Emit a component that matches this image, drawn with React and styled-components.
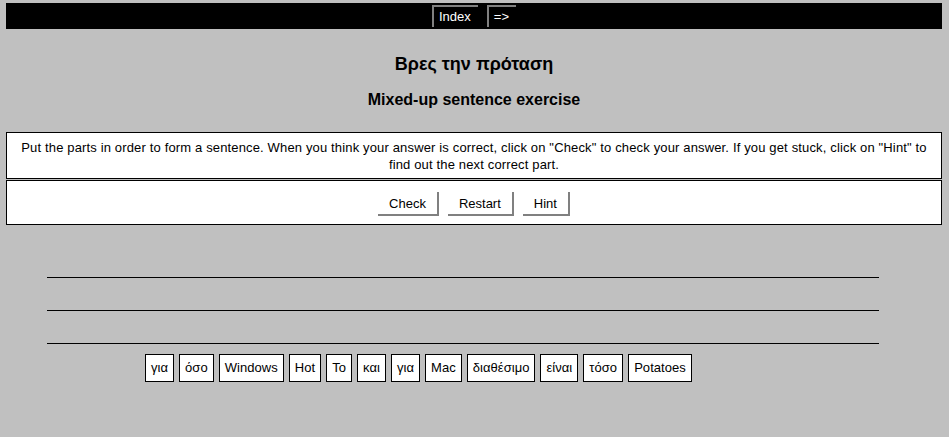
import styled, { createGlobalStyle } from 'styled-components'

const GlobalStyle = createGlobalStyle`
body {
  margin: 0;
  background-color: #c0c0c0;
  font-family: Arial, "Liberation Sans", sans-serif;
}
`

const words = ['για', 'όσο', 'Windows', 'Hot', 'Το', 'και', 'για', 'Mac', 'διαθέσιμο', 'είναι', 'τόσο', 'Potatoes']

const App = () => {
    return (
        <Page>
            <GlobalStyle />
            <NavBar>
                <NavTab>Index</NavTab>
                <NavTab>=&gt;</NavTab>
            </NavBar>
            <Title>Βρες την πρόταση</Title>
            <SubTitle>Mixed-up sentence exercise</SubTitle>
            <Box>
                <Instructions>
                    Put the parts in order to form a sentence. When you think your answer is correct, click on "Check" to check your answer. If you get stuck, click on "Hint" to find out the next correct part.
                </Instructions>
            </Box>
            <ButtonBox>
                <Button>Check</Button>
                <Button>Restart</Button>
                <Button>Hint</Button>
            </ButtonBox>
            <Answer>
                <Line />
                <Line />
                <Line />
            </Answer>
            <Tiles>
                {words.map((w, i) => <Tile key={i}>{w}</Tile>)}
            </Tiles>
        </Page>
    )
}

export default App

const Page = styled.div`
padding: 3px 7px 0 6px;
`
const NavBar = styled.div`
background: #000;
height: 26px;
display: flex;
justify-content: center;
align-items: flex-end;
gap: 9px;
padding-bottom: 2px;
box-sizing: border-box;
`
const NavTab = styled.div`
height: 22px;
box-sizing: border-box;
border-top: 2px solid #808080;
border-left: 2px solid #808080;
padding: 0 7px 0 5px;
color: #fff;
font-size: 13px;
line-height: 20px;
`
const Title = styled.h1`
margin: 25px 0 0;
text-align: center;
font-size: 18px;
line-height: 20px;
font-weight: bold;
color: #000;
`
const SubTitle = styled.h2`
margin: 16px 0 0;
text-align: center;
font-size: 16px;
line-height: 20px;
font-weight: bold;
color: #000;
`
const Box = styled.div`
margin-top: 22px;
background: #fff;
border: 1px solid #000;
padding: 6px 12px 5px;
`
const Instructions = styled.div`
text-align: center;
font-size: 13px;
line-height: 17px;
letter-spacing: 0.15px;
color: #000;
`
const ButtonBox = styled.div`
margin-top: 1px;
background: #fff;
border: 1px solid #000;
height: 45px;
box-sizing: border-box;
display: flex;
justify-content: center;
align-items: flex-start;
gap: 9px;
padding-top: 11px;
`
const Button = styled.button`
font-family: Arial, "Liberation Sans", sans-serif;
font-size: 13px;
color: #000;
background: #fff;
height: 24px;
padding: 0 11px;
border-style: solid;
border-width: 0 2px 2px 0;
border-color: #fff #808080 #808080 #fff;
cursor: pointer;
`
const Answer = styled.div`
margin: 20px 63px 0 41px;
`
const Line = styled.div`
height: 33px;
border-bottom: 1px solid #000;
box-sizing: border-box;
`
const Tiles = styled.div`
display: flex;
gap: 5px;
padding-left: 139px;
margin-top: 10px;
`
const Tile = styled.div`
background: #fff;
border: 1px solid #000;
height: 28px;
box-sizing: border-box;
padding: 0 5px;
font-size: 13px;
line-height: 26px;
letter-spacing: 0.05px;
color: #000;
`
